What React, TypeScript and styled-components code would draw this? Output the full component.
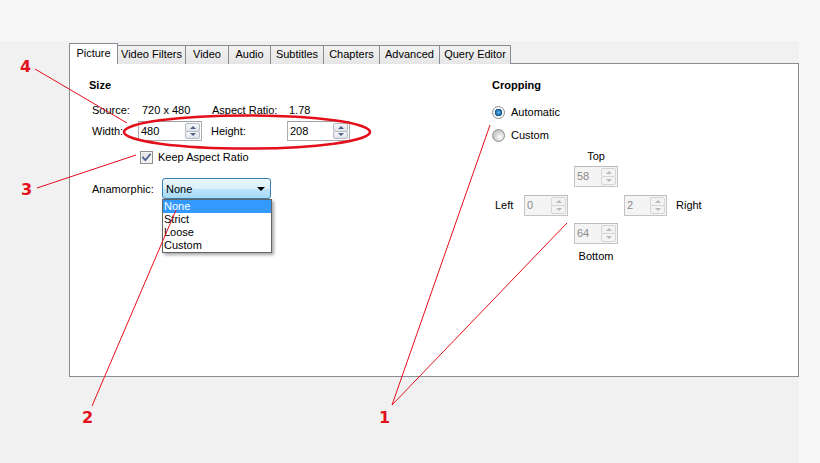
import styled, { createGlobalStyle } from 'styled-components';

const GlobalStyle = createGlobalStyle`
  html, body {
    margin: 0;
    padding: 0;
    background: #f7f7f7;
  }
  body {
    font-family: 'Liberation Sans', Arial, sans-serif;
    font-size: 11px;
    color: #000;
  }
`;

type TTab = { label: string; width: number; active?: boolean };

// widths include the shared 1px border with the neighbour
const TABS: TTab[] = [
  { label: 'Picture', width: 49, active: true },
  { label: 'Video Filters', width: 69 },
  { label: 'Video', width: 44 },
  { label: 'Audio', width: 43 },
  { label: 'Subtitles', width: 54 },
  { label: 'Chapters', width: 57 },
  { label: 'Advanced', width: 61 },
  { label: 'Query Editor', width: 72 },
];

const ANAMORPHIC = ['None', 'Strict', 'Loose', 'Custom'];

type TSpinProps = {
  value: string;
  width: number;
  height?: number;
  disabled?: boolean;
};

const SpinBox = ({ value, width, height = 20, disabled }: TSpinProps) => {
  return (
    <Spin $w={width} $h={height} $disabled={disabled}>
      <SpinValue>{value}</SpinValue>
      <SpinButtons>
        <SpinButton $disabled={disabled}>
          <Arrow $up $disabled={disabled} />
        </SpinButton>
        <SpinButton $disabled={disabled}>
          <Arrow $disabled={disabled} />
        </SpinButton>
      </SpinButtons>
    </Spin>
  );
};

const App = () => {
  return (
    <Page>
      <GlobalStyle />
      <Window>
        <TabBar>
          {TABS.map((tab) => (
            <Tab key={tab.label} $w={tab.width} $active={tab.active}>
              {tab.label}
            </Tab>
          ))}
        </TabBar>
        <Panel>
          <Columns>
            <Section>
              <Title>Size</Title>
              <SizeGrid>
                <Cell>Source:</Cell>
                <Cell $pad={4}>720 x 480</Cell>
                <Cell $pad={1}>Aspect Ratio:</Cell>
                <Cell $pad={2}>1.78</Cell>
                <Cell>Width:</Cell>
                <SpinBox value="480" width={64} />
                <Cell>Height:</Cell>
                <SpinBox value="208" width={63} />
              </SizeGrid>
              <CheckRow>
                <CheckBox>
                  <svg width="11" height="11" viewBox="0 0 11 11">
                    <path
                      d="M2 5.6 L4.4 8.2 L9 2.4"
                      fill="none"
                      stroke="#4b5f8c"
                      strokeWidth="1.8"
                      strokeLinecap="square"
                    />
                  </svg>
                </CheckBox>
                Keep Aspect Ratio
              </CheckRow>
              <ComboRow>
                <ComboLabel>Anamorphic:</ComboLabel>
                <ComboWrap>
                  <Combo>
                    None
                    <ComboArrow />
                  </Combo>
                  <DropList>
                    {ANAMORPHIC.map((item, i) => (
                      <DropItem key={item} $selected={i === 0}>
                        {item}
                      </DropItem>
                    ))}
                  </DropList>
                </ComboWrap>
              </ComboRow>
            </Section>

            <Section>
              <Title>Cropping</Title>
              <RadioGroup>
                <RadioRow>
                  <Radio $checked />
                  Automatic
                </RadioRow>
                <RadioRow>
                  <Radio />
                  Custom
                </RadioRow>
              </RadioGroup>
              <CropGrid>
                <CropLabel $col={3} $row={1} $center>
                  Top
                </CropLabel>
                <CropCell $col={3} $row={2} $center>
                  <SpinBox value="58" width={44} height={21} disabled />
                </CropCell>
                <CropLabel $col={1} $row={3} $tall>
                  Left
                </CropLabel>
                <CropCell $col={2} $row={3}>
                  <SpinBox value="0" width={44} height={21} disabled />
                </CropCell>
                <CropCell $col={4} $row={3}>
                  <SpinBox value="2" width={43} height={21} disabled />
                </CropCell>
                <CropLabel $col={5} $row={3} $tall $pad={9}>
                  Right
                </CropLabel>
                <CropCell $col={3} $row={4} $center>
                  <SpinBox value="64" width={44} height={21} disabled />
                </CropCell>
                <CropLabel $col={3} $row={5} $center>
                  Bottom
                </CropLabel>
              </CropGrid>
            </Section>
          </Columns>
        </Panel>
      </Window>

      <Annotations width="820" height="463" viewBox="0 0 820 463">
        <ellipse cx="247" cy="132" rx="123" ry="16.5" fill="none" stroke="#e3101b" strokeWidth="2.6" />
        <g stroke="#e3101b" strokeWidth="1">
          <line x1="35" y1="69" x2="127" y2="123" />
          <line x1="37" y1="188" x2="136" y2="155" />
          <line x1="92" y1="406" x2="176" y2="210" />
          <line x1="392" y1="405" x2="490" y2="125" />
          <line x1="392" y1="405" x2="567" y2="223" />
        </g>
      </Annotations>
      <Callout $x={20} $y={59}>4</Callout>
      <Callout $x={21} $y={182}>3</Callout>
      <Callout $x={82} $y={410}>2</Callout>
      <Callout $x={379} $y={410}>1</Callout>
    </Page>
  );
};

export default App;

const Page = styled.div`
  position: relative;
  width: 820px;
  height: 463px;
  overflow: hidden;
  background: #f7f7f7;
`;

const Window = styled.div`
  margin-top: 41px;
  width: 799px;
  height: 422px;
  padding: 2px 0 0 69px;
  box-sizing: border-box;
  background: #f1f1f1;
`;

const TabBar = styled.div`
  display: flex;
  align-items: flex-end;
  height: 21px;
`;

const Tab = styled.div<{ $w: number; $active?: boolean }>`
  position: ${({ $active }) => ($active ? 'relative' : 'static')};
  z-index: ${({ $active }) => ($active ? 1 : 'auto')};
  box-sizing: border-box;
  width: ${({ $w }) => $w}px;
  height: ${({ $active }) => ($active ? 21 : 19)}px;
  margin-left: -1px;
  padding-top: ${({ $active }) => ($active ? 3 : 2)}px;
  border: 1px solid #898c95;
  border-bottom: none;
  background: ${({ $active }) =>
    $active ? '#fff' : 'linear-gradient(#f2f2f2, #e6e6e6)'};
  text-align: center;
  white-space: nowrap;
  line-height: 13px;

  &:first-child {
    margin-left: 0;
  }
`;

const Panel = styled.div`
  box-sizing: border-box;
  width: 730px;
  height: 314px;
  margin-top: -1px;
  padding: 15px 0 0 19px;
  border: 1px solid #898c95;
  background: #fff;
`;

const Columns = styled.div`
  display: grid;
  grid-template-columns: 403px 1fr;
`;

const Section = styled.div`
  display: flex;
  flex-direction: column;
  align-items: flex-start;
`;

const Title = styled.div`
  font-weight: bold;
  line-height: 13px;
`;

const SizeGrid = styled.div`
  display: grid;
  grid-template-columns: 46px 73px 76px 64px;
  grid-template-rows: 14px 20px;
  row-gap: 4px;
  align-items: center;
  margin-top: 11px;
  padding-left: 3px;
`;

const Cell = styled.div<{ $pad?: number }>`
  padding-left: ${({ $pad }) => $pad ?? 0}px;
  line-height: 14px;
  white-space: nowrap;
`;

const Spin = styled.div<{ $w: number; $h: number; $disabled?: boolean }>`
  display: flex;
  box-sizing: border-box;
  width: ${({ $w }) => $w}px;
  height: ${({ $h }) => $h}px;
  border: 1px solid ${({ $disabled }) => ($disabled ? '#c2c4c8' : '#abadb3')};
  border-top-color: ${({ $disabled }) => ($disabled ? '#b9bbbf' : '#9ea0a6')};
  background: ${({ $disabled }) => ($disabled ? '#f4f4f4' : '#fff')};
  color: ${({ $disabled }) => ($disabled ? '#8a8a8a' : '#000')};
`;

const SpinValue = styled.div`
  flex: 1;
  padding-left: 2px;
  display: flex;
  align-items: center;
  line-height: 13px;
`;

const SpinButtons = styled.div`
  display: flex;
  flex-direction: column;
  width: 15px;
  padding: 1px 1px 1px 0;
`;

const SpinButton = styled.div<{ $disabled?: boolean }>`
  flex: 1;
  display: flex;
  align-items: center;
  justify-content: center;
  border: 1px solid ${({ $disabled }) => ($disabled ? '#d4d5d8' : '#b6bac2')};
  border-radius: 2px;
  background: ${({ $disabled }) =>
    $disabled ? '#f3f3f3' : 'linear-gradient(#f6f7f9, #dfe3ea)'};

  & + & {
    margin-top: -1px;
  }
`;

const Arrow = styled.span<{ $up?: boolean; $disabled?: boolean }>`
  width: 0;
  height: 0;
  border-left: 3px solid transparent;
  border-right: 3px solid transparent;
  ${({ $up, $disabled }) => {
    const c = $disabled ? '#b9b9b9' : '#4d6185';
    return $up ? `border-bottom: 3px solid ${c};` : `border-top: 3px solid ${c};`;
  }}
`;

const CheckRow = styled.div`
  display: flex;
  align-items: center;
  gap: 5px;
  margin-top: 10px;
  padding-left: 51px;
  height: 13px;
  line-height: 13px;
`;

const CheckBox = styled.span`
  box-sizing: border-box;
  width: 13px;
  height: 13px;
  display: flex;
  align-items: center;
  justify-content: center;
  border: 1px solid #8e8f8f;
  background: linear-gradient(135deg, #dcdcdc, #fbfbfb);
  box-shadow: inset 0 0 0 1px #f4f4f4;
`;

const ComboRow = styled.div`
  display: flex;
  align-items: center;
  margin-top: 14px;
  padding-left: 3px;
`;

const ComboLabel = styled.div`
  width: 70px;
`;

const ComboWrap = styled.div`
  position: relative;
`;

const Combo = styled.div`
  position: relative;
  box-sizing: border-box;
  width: 109px;
  height: 21px;
  padding-left: 3px;
  display: flex;
  align-items: center;
  border: 1px solid #3c7fb1;
  border-radius: 3px;
  background: linear-gradient(#eaf6fd 0%, #d9f0fc 50%, #bee6fd 51%, #a7d9f5 100%);
`;

const ComboArrow = styled.span`
  position: absolute;
  right: 5px;
  top: 8px;
  width: 0;
  height: 0;
  border-left: 4px solid transparent;
  border-right: 4px solid transparent;
  border-top: 4px solid #000;
`;

const DropList = styled.div`
  position: absolute;
  top: 100%;
  left: 0;
  z-index: 2;
  box-sizing: border-box;
  width: 110px;
  border: 1px solid #646464;
  background: #fff;
  box-shadow: 2px 2px 3px rgba(0, 0, 0, 0.35);
`;

const DropItem = styled.div<{ $selected?: boolean }>`
  height: 13px;
  line-height: 13px;
  padding-left: 1px;
  background: ${({ $selected }) => ($selected ? '#3399ff' : 'transparent')};
  color: ${({ $selected }) => ($selected ? '#fff' : '#000')};
`;

const RadioGroup = styled.div`
  display: flex;
  flex-direction: column;
  gap: 9px;
  margin-top: 13px;
`;

const RadioRow = styled.div`
  display: flex;
  align-items: center;
  gap: 6px;
  height: 14px;
  line-height: 14px;
`;

const Radio = styled.span<{ $checked?: boolean }>`
  box-sizing: border-box;
  width: 13px;
  height: 13px;
  border-radius: 50%;
  border: 1px solid #8e8f8f;
  background: ${({ $checked }) =>
    $checked
      ? 'radial-gradient(circle, #6fc3f2 0, #2a7fbd 2px, #124f83 3.5px, #f2f2f2 4px, #fff 6px)'
      : 'radial-gradient(circle at 65% 65%, #ffffff 0, #e6e6e6 3px, #c9c9c9 6px)'};
`;

const CropGrid = styled.div`
  display: grid;
  grid-template-columns: 29px 44px 56px 43px auto;
  grid-template-rows: 17px 29px 28px 26px 14px;
  margin-top: 7px;
  margin-left: 3px;
`;

const CropCell = styled.div<{ $col: number; $row: number; $center?: boolean }>`
  grid-column: ${({ $col }) => $col};
  grid-row: ${({ $row }) => $row};
  display: flex;
  justify-content: ${({ $center }) => ($center ? 'center' : 'flex-start')};
  align-items: flex-start;
`;

const CropLabel = styled.div<{
  $col: number;
  $row: number;
  $center?: boolean;
  $tall?: boolean;
  $pad?: number;
}>`
  grid-column: ${({ $col }) => $col};
  grid-row: ${({ $row }) => $row};
  text-align: ${({ $center }) => ($center ? 'center' : 'left')};
  line-height: ${({ $tall }) => ($tall ? 21 : 14)}px;
  padding-left: ${({ $pad }) => $pad ?? 0}px;
  white-space: nowrap;
`;

const Annotations = styled.svg`
  position: absolute;
  left: 0;
  top: 0;
  z-index: 5;
  pointer-events: none;
`;

const Callout = styled.span<{ $x: number; $y: number }>`
  position: absolute;
  left: ${({ $x }) => $x}px;
  top: ${({ $y }) => $y}px;
  z-index: 6;
  font-family: 'DejaVu Sans', Verdana, sans-serif;
  font-weight: bold;
  font-size: 16px;
  line-height: 16px;
  color: #e3101b;
`;
